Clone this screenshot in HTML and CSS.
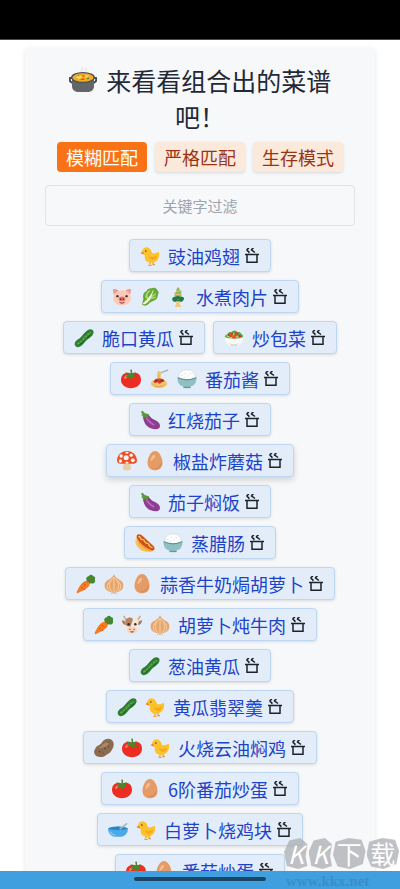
FILE: index.html
```html
<!DOCTYPE html>
<html lang="zh-CN">
<head>
<meta charset="utf-8">
<meta name="viewport" content="width=device-width, initial-scale=1">
<title>菜谱</title>
<link rel="stylesheet" href="styles.css">
</head>
<body>
<svg class="sprite" aria-hidden="true">
  <symbol id="chick" viewBox="0 0 24 24">
    <path d="M12 18v4M10 23h4M15 18l1 4M15 22.500h3" fill="none" stroke="#ef8b1c" stroke-width="1.300"/>
    <path d="M2.500 6C3.500 2 7 .500 10 2c3 1 3.500 4 4.500 6.500 2.500 1 5.500-.5 8-1.500 1.500 4.500-.5 12.500-8 13-6.500.500-10-3.500-8.500-9L1 8.500z" fill="#fcc22c"/>
    <path d="M11 12c3 2 7 1 9.500-1-.5 4-3 6-6 5.500-2-.3-3.500-2-3.500-4.500z" fill="#f7a81b"/>
    <path d="M3.500 7L.5 8.800l4.500 1.500z" fill="#f0801a"/><circle cx="7" cy="6" r="1" fill="#543930"/>
  </symbol>
  <symbol id="pig" viewBox="0 0 24 24">
    <path d="M2 9L1 3c3-1.500 6 0 7 2M22 9l1-6c-3-1.500-6 0-7 2" fill="#f29a90"/>
    <path d="M12 4c6 0 10.500 4 10.500 9.500S18 22 12 22 1.500 18.500 1.500 13.500 6 4 12 4z" fill="#fbcab5"/>
    <circle cx="6.500" cy="11" r="1.400" fill="#403030"/><circle cx="17.500" cy="11" r="1.400" fill="#403030"/>
    <ellipse cx="12" cy="14.500" rx="4.200" ry="3" fill="#ee7777"/><path d="M10.500 13.500v2M13.500 13.500v2" stroke="#6d2929" stroke-width="1.500"/>
    <path d="M9 18.500q3 2 6 0" fill="none" stroke="#74413b" stroke-width="1.200"/>
  </symbol>
  <symbol id="greens" viewBox="0 0 24 24">
    <path d="M4 22C1 21 4 17 4 14 3 8 5 6 8 5c1-4 6-3 8-4 4-1 4 3 6 4 1 3-1 4-1 7-1 4-4 4-6 5-4 1-6 7-11 5z" fill="#68a838"/>
    <path d="M7 13c0-5 3-7 5-9M16 4l-4 9 7-5M12 13c3 1 5 0 7-1M9 15l-1-6" fill="none" stroke="#b8dc83" stroke-width="1.500"/>
    <path d="M3 20l6-6 7-9-4 11c-2 1-6 7-9 4z" fill="#edf5cd"/>
  </symbol>
  <symbol id="pine" viewBox="0 0 24 24">
    <path d="M10 3l2-3 2 2v11h-4zM13 5l3-1v9h-3zM8 7l2-1v8H8z" fill="#91b957"/>
    <path d="M8 9h8M10 5h4" stroke="#e0c074" stroke-width="1.300"/>
    <path d="M5 15c0-3 3-4 4-3 2-2 4-1 6 0 3-1 5 1 4 3s-2 3-4 3H9c-2 0-4-1-4-3z" fill="#227a4c"/>
    <path d="M9 17h6l-1 3 2 4H8l2-4z" fill="#f1c77e"/><circle cx="12" cy="15" r="1" fill="#e84d36"/>
  </symbol>
  <symbol id="cucumber" viewBox="0 0 24 24">
    <path d="M2 22c-3-3 0-7 4-9 4-3 6-8 11-11 4-2 8 1 6 5-2 5-7 6-10 10-3 4-8 8-11 5z" fill="#2e7d32"/>
    <path d="M4 19c4-1 7-6 10-9 2-2 5-3 6-5" fill="none" stroke="#63a94b" stroke-width="2" stroke-dasharray="3 1"/>
    <path d="M7 20l4-4M16 12l4-4" stroke="#184f23"/>
  </symbol>
  <symbol id="salad" viewBox="0 0 24 24">
    <path d="M1 11c0-3 3-3 4-5 2-2 4 0 5-2 3-2 5 0 6 1 4-1 4 2 6 3 2 2 0 4-1 5H2z" fill="#58a83b"/>
    <path d="M3 9l6 3 3-6M14 10l6 1" stroke="#a8d65c" stroke-width="2"/>
    <circle cx="8" cy="8" r="2.500" fill="#ed402f"/><circle cx="15" cy="7" r="2.300" fill="#e93b2d"/><circle cx="12" cy="11" r="2.500" fill="#f04b36"/><circle cx="19" cy="10" r="1.600" fill="#d73127"/>
    <path d="M1 11q11 4 22 0c0 6-4 10-8 11H9C5 21 1 17 1 11z" fill="#fbf9f5"/><path d="M6 18q6 3 12 0l-3 4H9z" fill="#d8dcd9"/>
  </symbol>
  <symbol id="tomato" viewBox="0 0 24 24">
    <path d="M12 5c7-2 12 1 12 8 0 6-5 10-12 10S0 19 0 13C0 6 6 3 12 5z" fill="#ee2d22"/>
    <path d="M4 10c1-2 3-3 5-2-2 2-3 4-5 4z" fill="#ff8b76"/>
    <path d="M12 6l-1-5 2-.5.500 5L18 4l-3 4 5 3-6-1-2 3-2-4-5 1 3-3-3-3z" fill="#438b2e"/>
  </symbol>
  <symbol id="pasta" viewBox="0 0 24 24">
    <path d="M13 5l8-3 2-1" stroke="#a9b4ba" stroke-width="1.800"/>
    <path d="M10 13V4c0-2 4-2 4 0v9z" fill="#f5c96b"/>
    <ellipse cx="12" cy="17.500" rx="10" ry="5.500" fill="#f6c775"/><path d="M4 18q8 6 16 0M6 20q6 3 12 0" fill="none" stroke="#e3a549"/>
    <path d="M5 15l3-3 4-1 5 1 2 3-4 1-2 2-3-2-3 1z" fill="#d83b25"/><circle cx="9" cy="14" r="1.300" fill="#872d20"/><circle cx="15" cy="14" r="1.300" fill="#872d20"/>
    <path d="M11 13V5M13 13V5" stroke="#dda34c" stroke-width=".6"/>
  </symbol>
  <symbol id="rice" viewBox="0 0 24 24">
    <path d="M2 11C2 5 6 1 12 1s10 4 10 10q-10 4-20 0z" fill="#fff" stroke="#cdd3d6" stroke-width=".7"/><path d="M5 8l2-1M9 5l2 1M15 5l2 1M12 9l2-1M8 10h2M18 9l1 1" stroke="#d6d9da"/>
    <path d="M.5 10q11.500 5 23 0c0 7-3 10-7 11v2h-9v-2C3 20 .500 17 .500 10z" fill="#8fc1c4"/>
    <path d="M1 10.500q11 5 22 0" fill="none" stroke="#5c9299" stroke-width="1.300"/><path d="M8 22h8" stroke="#55858b"/>
  </symbol>
  <symbol id="eggplant" viewBox="0 0 24 24">
    <path d="M4 6c4-4 7 1 10 4 3 2 10 4 10 9 0 5-6 5-11 3C7 20 3 13 4 6z" fill="#8e3d91"/>
    <path d="M8 9c1 4 4 6 9 9" fill="none" stroke="#b86bb9" stroke-width="2"/>
    <path d="M1 2l2-1 3 3 5 1-2 2 1 4-4-3-2 4-1-5-2-1 2-1z" fill="#579b35"/>
  </symbol>
  <symbol id="mushroom" viewBox="0 0 24 24">
    <path d="M9 12h6l2 9c-1 3-9 3-10 0z" fill="#e8cda2"/>
    <path d="M0 12C0 5 5 0 12 0s12 5 12 12c-1 5-8 3-12 3S1 17 0 12z" fill="#ef4e2b"/>
    <g fill="#fff4e8"><circle cx="11" cy="8" r="3"/><circle cx="17" cy="5" r="2"/><circle cx="5" cy="6" r="2"/><circle cx="19" cy="11" r="2.300"/><circle cx="4" cy="12" r="2"/><ellipse cx="12" cy="2" rx="2" ry="1"/><ellipse cx="12" cy="14" rx="2" ry="1"/></g>
  </symbol>
  <symbol id="egg" viewBox="0 0 24 24">
    <path d="M12 0c5 0 9 8 9 14 0 6-4 9-9 9s-9-3-9-9C3 8 7 0 12 0z" fill="#e59b65"/>
    <path d="M8 7c2-4 5-3 4 0-1 2-3 4-5 5-1 0 0-3 1-5z" fill="#f5bd90"/><path d="M20 13c1 7-5 10-11 8 6 0 9-3 11-8z" fill="#d98b57"/>
  </symbol>
  <symbol id="hotdog" viewBox="0 0 24 24">
    <path d="M2 4c3-4 8-1 11 3l9 8c4 4-1 9-6 7C9 20 0 11 2 4z" fill="#f2a638"/>
    <path d="M2 4c0-4 5-3 7 0l13 12c3 4 0 6-3 4C12 18 3 10 2 4z" fill="#cf4d23"/>
    <path d="M4 4c4 0 1 4 5 4s1 4 5 4 1 4 7 6" fill="none" stroke="#ffd84d" stroke-width="1.500"/>
    <path d="M1 7c2 7 9 13 17 15-9 3-20-7-17-15z" fill="#f9bf55"/>
  </symbol>
  <symbol id="carrot" viewBox="0 0 24 24">
    <path d="M13 10c0-3-2-5 1-7 2 0 2-2 4-2 2 0 2 2 4 2 2 2 0 3 1 5 0 3-3 4-5 3l-3 1z" fill="#40892e"/>
    <path d="M10 9c3-2 8 2 6 5-3 4-10 7-14 9-2 0-1-1-1-2 2-4 5-10 9-12z" fill="#f57c22"/>
    <path d="M9 12l3 2M6 16l2 1M9 18l2 1M14 10l4-5" stroke="#c95319"/>
  </symbol>
  <symbol id="onion" viewBox="0 0 24 24">
    <path d="M12 0c1 3 2 4 5 6 5 2 7 5 6 10-1 4-5 6-11 6S2 20 1 16C0 11 2 8 7 6c3-2 4-3 5-6z" fill="#e8a66f"/>
    <path d="M12 4C5 9 5 17 10 22M12 4c7 5 7 13 2 18M12 4v18M9 7c-6 5-6 9-3 13M15 7c6 5 6 9 3 13" fill="none" stroke="#f8d6ab"/>
    <path d="M10 22l-1 1.500M12 22v2M14 22l1 1.500" stroke="#b98657"/>
  </symbol>
  <symbol id="cow" viewBox="0 0 24 24">
    <path d="M5 6L2 1M19 6l3-5" stroke="#cfae8d" stroke-width="2"/>
    <path d="M5 8L0 6c0 4 2 6 5 6M19 8l5-2c0 4-2 6-5 6" fill="#ab7953"/>
    <path d="M4 7c3-5 13-5 16 0l-1 9c0 4-3 7-7 7s-7-3-7-7z" fill="#f4e7d8"/>
    <path d="M5 5c4-3 7-2 8 0l-1 4-2 5-5-1-1-6z" fill="#b68361"/>
    <circle cx="8" cy="11" r="1.500" fill="#302c2b"/><circle cx="16" cy="11" r="1.500" fill="#302c2b"/>
    <ellipse cx="12" cy="18" rx="6" ry="4" fill="#fbd3b8"/><path d="M9.500 16.500v1.500M14.500 16.500v1.500M10 20q2 1 4 0" fill="none" stroke="#684337" stroke-width="1.200"/>
  </symbol>
  <symbol id="potato" viewBox="0 0 24 24">
    <path d="M2 12c1-3 5-3 7-6 3-5 8-6 12-4 4 3 3 9 0 13-2 4-5 4-7 6-4 3-9 2-12 0-3-3-2-6 0-9z" fill="#8c6b4f"/>
    <path d="M5 12c3-1 5-4 8-6 2-1 4-1 5 0-2 4-7 7-13 6z" fill="#aa8867"/><path d="M6 16l2 1M12 12l2 1M17 10l1 1M11 18h1M17 5h1" stroke="#5b4232" stroke-width="1.300"/>
  </symbol>
  <symbol id="bowl" viewBox="0 0 24 24">
    <path d="M0 10q12-5 24 0c0 6-4 10-8 10H8c-4 0-8-4-8-10z" fill="#4ba9e8"/>
    <ellipse cx="12" cy="10" rx="11" ry="2" fill="#2384c8"/><path d="M3 14c1 3 3 4 6 4" fill="none" stroke="#8bd0fa" stroke-width="1.500"/><path d="M14 11l9-7" stroke="#a9b4bb" stroke-width="1.800"/>
  </symbol>
  <symbol id="stew" viewBox="0 0 28 28">
    <path d="M13 6c-3-3 2-3 0-6M17 6c-3-3 2-3 0-5" stroke="#e6e7e8" stroke-width="1.500" fill="none"/>
    <path d="M4 11H1c-1 3 1 5 4 5M24 11h3c1 3-1 5-4 5" fill="none" stroke="#454a4d" stroke-width="2"/>
    <path d="M3 10h22v9c0 4-3 6-7 6h-8c-4 0-7-2-7-6z" fill="#626668"/>
    <ellipse cx="14" cy="10.500" rx="12" ry="5.500" fill="#4d5254"/><ellipse cx="14" cy="10.500" rx="10.500" ry="4.300" fill="#f5ac26"/>
    <path d="M7 10l3-2 3 2-3 2zM16 8l4 1-3 2z" fill="#ffdc69"/><path d="M11 13l3-2 2 2zM13 8l3 1-2 1z" fill="#da5925"/><path d="M18 12l2-1M9 9l1-1" stroke="#599435" stroke-width="1.500"/>
  </symbol>
  <symbol id="steam-pot" viewBox="0 0 16 16">
    <path d="M1 6.500h14M3 7v7.300h10V7M5 0Q1.500 2 4 3.200q1.500.8.500 1.800M9.500 0Q6 2 8.500 2.700L11 4.500" fill="none" stroke="#1d2228" stroke-width="1.500"/>
  </symbol>
</svg>

<div class="screen">
  <header class="status"></header>
  <main class="content">
    <section class="card">
      <h1 class="title"><svg class="title-icon" aria-hidden="true"><use href="#stew"/></svg> 来看看组合出的菜谱吧！</h1>
      <div class="modes">
        <button class="mode mode-active" type="button">模糊匹配</button>
        <button class="mode" type="button">严格匹配</button>
        <button class="mode" type="button">生存模式</button>
      </div>
      <input class="filter" type="text" placeholder="关键字过滤" aria-label="关键字过滤">
      <div class="dishes">
        <a class="dish" href="#"><svg class="food"><use href="#chick"/></svg><span>豉油鸡翅</span><svg class="tool"><use href="#steam-pot"/></svg></a>
        <a class="dish" href="#"><svg class="food"><use href="#pig"/></svg><svg class="food"><use href="#greens"/></svg><svg class="food"><use href="#pine"/></svg><span>水煮肉片</span><svg class="tool"><use href="#steam-pot"/></svg></a>
        <a class="dish" href="#"><svg class="food"><use href="#cucumber"/></svg><span>脆口黄瓜</span><svg class="tool"><use href="#steam-pot"/></svg></a>
        <a class="dish" href="#"><svg class="food"><use href="#salad"/></svg><span>炒包菜</span><svg class="tool"><use href="#steam-pot"/></svg></a>
        <a class="dish" href="#"><svg class="food"><use href="#tomato"/></svg><svg class="food"><use href="#pasta"/></svg><svg class="food"><use href="#rice"/></svg><span>番茄酱</span><svg class="tool"><use href="#steam-pot"/></svg></a>
        <a class="dish" href="#"><svg class="food"><use href="#eggplant"/></svg><span>红烧茄子</span><svg class="tool"><use href="#steam-pot"/></svg></a>
        <a class="dish dish-raised" href="#"><svg class="food"><use href="#mushroom"/></svg><svg class="food"><use href="#egg"/></svg><span>椒盐炸蘑菇</span><svg class="tool"><use href="#steam-pot"/></svg></a>
        <a class="dish" href="#"><svg class="food"><use href="#eggplant"/></svg><span>茄子焖饭</span><svg class="tool"><use href="#steam-pot"/></svg></a>
        <a class="dish" href="#"><svg class="food"><use href="#hotdog"/></svg><svg class="food"><use href="#rice"/></svg><span>蒸腊肠</span><svg class="tool"><use href="#steam-pot"/></svg></a>
        <a class="dish" href="#"><svg class="food"><use href="#carrot"/></svg><svg class="food"><use href="#onion"/></svg><svg class="food"><use href="#egg"/></svg><span>蒜香牛奶焗胡萝卜</span><svg class="tool"><use href="#steam-pot"/></svg></a>
        <a class="dish" href="#"><svg class="food"><use href="#carrot"/></svg><svg class="food"><use href="#cow"/></svg><svg class="food"><use href="#onion"/></svg><span>胡萝卜炖牛肉</span><svg class="tool"><use href="#steam-pot"/></svg></a>
        <a class="dish" href="#"><svg class="food"><use href="#cucumber"/></svg><span>葱油黄瓜</span><svg class="tool"><use href="#steam-pot"/></svg></a>
        <a class="dish" href="#"><svg class="food"><use href="#cucumber"/></svg><svg class="food"><use href="#chick"/></svg><span>黄瓜翡翠羹</span><svg class="tool"><use href="#steam-pot"/></svg></a>
        <a class="dish" href="#"><svg class="food"><use href="#potato"/></svg><svg class="food"><use href="#tomato"/></svg><svg class="food"><use href="#chick"/></svg><span>火烧云油焖鸡</span><svg class="tool"><use href="#steam-pot"/></svg></a>
        <a class="dish" href="#"><svg class="food"><use href="#tomato"/></svg><svg class="food"><use href="#egg"/></svg><span>6阶番茄炒蛋</span><svg class="tool"><use href="#steam-pot"/></svg></a>
        <a class="dish" href="#"><svg class="food"><use href="#bowl"/></svg><svg class="food"><use href="#chick"/></svg><span>白萝卜烧鸡块</span><svg class="tool"><use href="#steam-pot"/></svg></a>
        <a class="dish" href="#"><svg class="food"><use href="#tomato"/></svg><svg class="food"><use href="#egg"/></svg><span>番茄炒蛋</span><svg class="tool"><use href="#steam-pot"/></svg></a>
      </div>
    </section>
  </main>
  <footer class="navbar"><span class="handle"></span></footer>
  <div class="watermark">
    <div class="tiles"><span>K</span><span>K</span><span>下</span><span>载</span></div>
    <div class="site">www.kkx.net</div>
  </div>
</div>
</body>
</html>
```

FILE: styles.css
```css
* {
  box-sizing: border-box;
}

body {
  margin: 0;
  background: #fff;
  font-family: "Noto Sans CJK SC", sans-serif;
}

.sprite {
  display: none;
}

.screen {
  position: relative;
  display: flex;
  flex-direction: column;
  height: 100vh;
  overflow: hidden;
}

.status {
  flex: none;
  height: 40px;
  background: #000;
  border-bottom: 1px solid #4a4a4a;
}

.content {
  flex: 1;
  min-height: 0;
  overflow: hidden;
  padding: 8px 25px 0;
}

.card {
  padding: 14px 20px 24px;
  border-radius: 4px;
  background: #f7f8fa;
  box-shadow: 0 1px 4px rgba(0, 0, 0, 0.1);
  text-align: center;
}

.title {
  margin: 0 0 8px;
  color: #1f2937;
  font-size: 25px;
  font-weight: 400;
  line-height: 36px;
}

.title-icon {
  width: 28px;
  height: 28px;
  margin-right: 4px;
  vertical-align: -4px;
}

.modes {
  display: flex;
  flex-wrap: wrap;
  justify-content: center;
  gap: 8px;
}

.mode {
  height: 30px;
  padding: 0 9px;
  border: 0;
  border-radius: 4px;
  background: #fbe9dc;
  box-shadow: 0 1px 3px rgba(0, 0, 0, 0.14);
  color: #9a3412;
  font-family: inherit;
  font-size: 18px;
  line-height: 30px;
}

.mode-active {
  background: #f97316;
  box-shadow: none;
  color: #fff;
}

.filter {
  display: block;
  width: 100%;
  height: 41px;
  margin: 13px 0;
  padding: 0 8px;
  border: 1px solid #e0e3e7;
  border-radius: 4px;
  background: transparent;
  color: #1f2937;
  font-family: inherit;
  font-size: 15px;
  text-align: center;
}

.filter::placeholder {
  color: #9ca3af;
}

.dishes {
  display: flex;
  flex-wrap: wrap;
  justify-content: center;
  gap: 8px;
  padding: 0 8px;
}

.dish {
  display: flex;
  align-items: center;
  height: 33px;
  padding: 0 10px;
  border: 1px solid #bdd6f4;
  border-radius: 4px;
  background: #e3edf9;
  box-shadow: 0 1px 3px rgba(0, 0, 0, 0.12);
  color: #1d43c8;
  font-size: 18px;
  line-height: 30px;
  text-decoration: none;
}

.dish-raised {
  box-shadow: 0 3px 6px rgba(0, 0, 0, 0.16);
}

.food {
  flex: none;
  width: 20px;
  height: 20px;
  margin-right: 8px;
}

.tool {
  flex: none;
  width: 16px;
  height: 16px;
  margin-left: 4px;
}

.navbar {
  flex: none;
  display: flex;
  justify-content: center;
  height: 18px;
  padding-top: 6px;
  background: #3f9fdf;
}

.handle {
  width: 33%;
  height: 4px;
  border-radius: 2px;
  background: #1a4767;
}

.watermark {
  position: absolute;
  right: 1px;
  bottom: 0;
  width: 115px;
}

.tiles {
  display: flex;
  gap: 1px;
  height: 31px;
  margin-bottom: 5px;
}

.tiles span {
  flex: 1 1 32px;
  background: rgba(168, 170, 174, 0.72);
  clip-path: polygon(8% 12%, 48% 0, 88% 6%, 100% 42%, 92% 84%, 52% 100%, 14% 92%, 0 55%);
  color: #fff;
  font-size: 25px;
  line-height: 30px;
  text-align: center;
}

.tiles span:nth-child(-n+2) {
  flex-basis: 23px;
  clip-path: polygon(22% 8%, 70% 0, 100% 20%, 92% 60%, 100% 90%, 60% 100%, 12% 90%, 0 45%);
  font-style: italic;
}

.site {
  padding-left: 2px;
  color: #3a8ec8;
  font-family: "Liberation Serif", serif;
  font-size: 15px;
  font-weight: 700;
  line-height: 15px;
}
```
